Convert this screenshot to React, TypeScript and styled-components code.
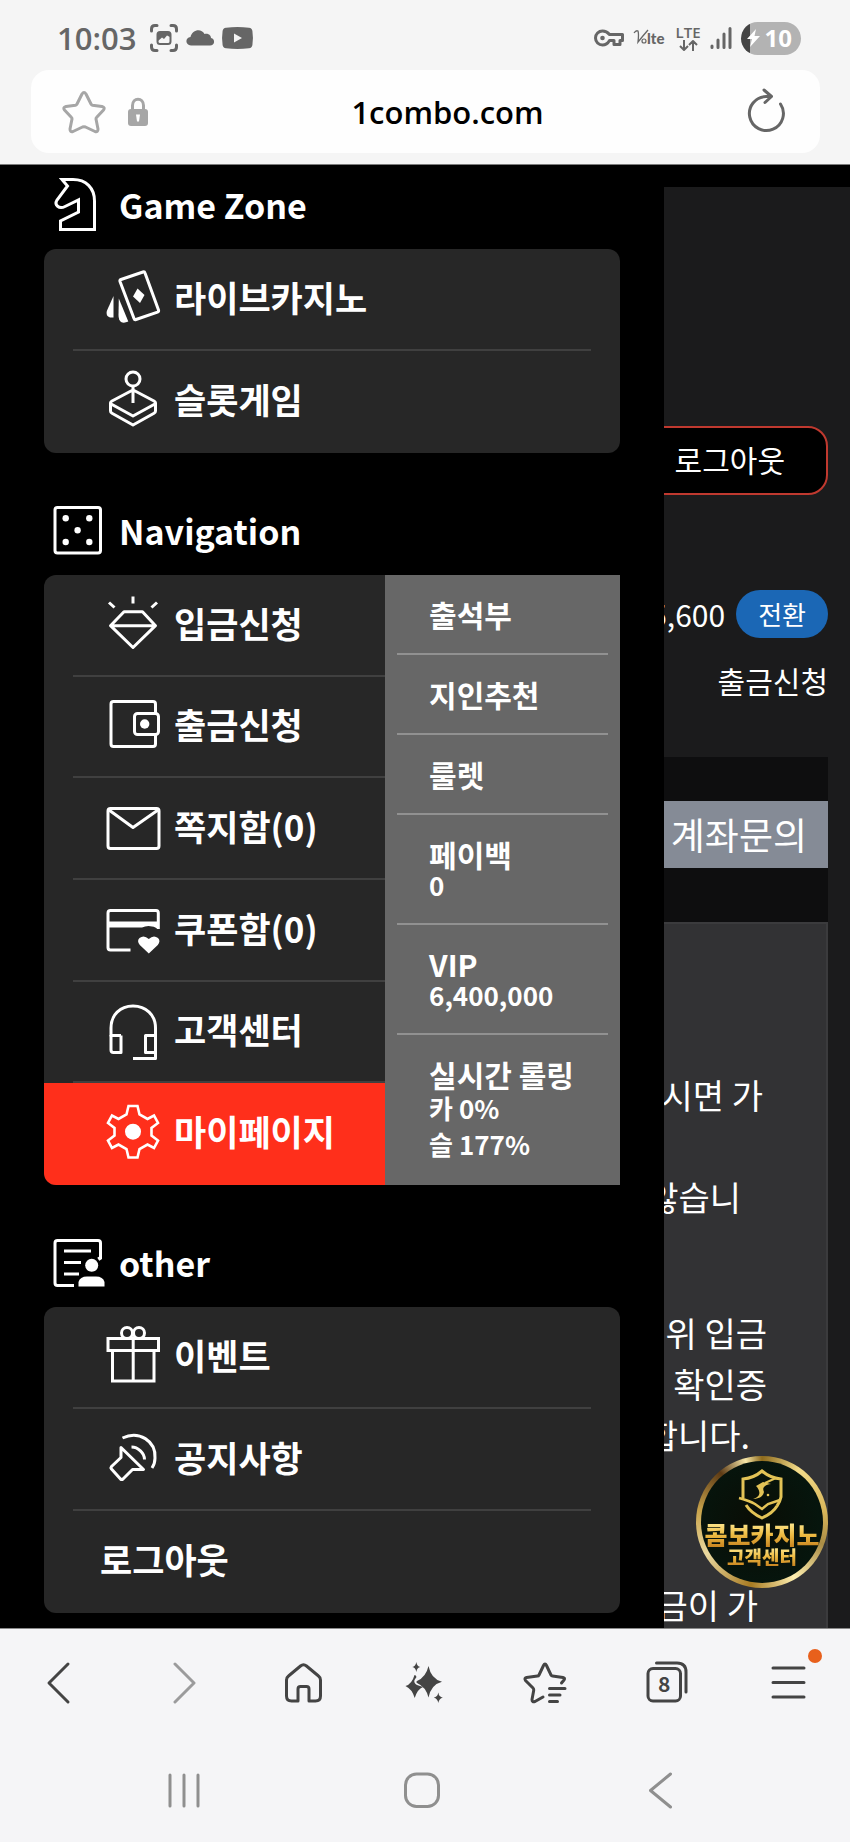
import * as React from 'react';
import styled, { createGlobalStyle } from 'styled-components';

const GlobalStyle = createGlobalStyle`
  * {
    box-sizing: border-box;
  }
  body {
    margin: 0;
    background: #f5f5f7;
    font-family: 'Noto Sans CJK KR', 'Noto Sans', sans-serif;
  }
  h2, p, ul {
    margin: 0;
    padding: 0;
  }
  ul {
    list-style: none;
  }
  a {
    color: inherit;
    text-decoration: none;
  }
  button {
    border: 0;
    padding: 0;
    background: none;
    color: inherit;
    font: inherit;
    cursor: pointer;
  }
  svg {
    display: block;
    flex: none;
    overflow: visible;
  }
`;

/* ---------- browser chrome ---------- */

const StatusBar = styled.div`
  display: flex;
  align-items: center;
  justify-content: space-between;
  height: 70px;
  padding: 6px 49px 0 57px;
  background: #f5f5f5;
  color: #666;
`;

const StatusGroup = styled.div<{ $gap: number }>`
  display: flex;
  align-items: center;
  gap: ${(p) => p.$gap}px;
`;

const Clock = styled.span`
  margin-right: 6px;
  font: 600 31px/36px 'Open Sans', sans-serif;
`;

const Network = styled.div`
  display: flex;
  flex-direction: column;
  align-items: center;
  font: 600 15px/14px 'Open Sans', sans-serif;
`;

const Battery = styled.div`
  display: flex;
  align-items: center;
  gap: 4px;
  height: 33px;
  padding: 0 9px 0 10px;
  border-radius: 17px;
  background: linear-gradient(90deg, #444 9px, #b3b3b3 9px);
  color: #fff;
  font: 700 24px/32px 'Open Sans', sans-serif;
`;

const AddressArea = styled.div`
  padding: 0 30px 11px 31px;
  border-bottom: 1px solid #7c7c7c;
  background: #f5f5f5;
`;

const AddressBar = styled.form`
  display: flex;
  align-items: center;
  height: 83px;
  padding: 0 34px 0 31px;
  border-radius: 18px;
  background: #fefefe;
`;

const IconButton = styled.button<{ $color: string }>`
  color: ${(p) => p.$color};
`;

const LockMark = styled.span`
  margin-left: 21px;
`;

const UrlInput = styled.input`
  flex: 1;
  min-width: 0;
  height: 48px;
  padding: 0;
  border: 0;
  outline: 0;
  background: none;
  color: #000;
  font: 600 31px/48px 'Open Sans', sans-serif;
  text-align: center;
`;

/* ---------- web view ---------- */

const WebView = styled.div`
  position: relative;
  display: grid;
  grid-template-columns: minmax(0, 25fr) minmax(0, 7fr);
  border-bottom: 1px solid #8a8a8a;
  background: #000;
  color: #fff;
`;

const Drawer = styled.nav`
  display: flex;
  flex-direction: column;
  gap: 38px;
  padding: 0 44px 15px;
`;

const SectionTitle = styled.h2`
  display: flex;
  align-items: flex-start;
  gap: 9px;
  height: 84px;
  padding: 10px 0 0 6px;
  font-size: 34px;
  line-height: 59px;
  font-weight: 700;
`;

const Card = styled.div`
  display: grid;
  grid-template-columns: minmax(0, 1fr) auto;
  border-radius: 12px;
  background: #272727;
`;

const MenuList = styled.ul<{ $split?: boolean }>`
  display: grid;
  grid-auto-rows: minmax(100px, 1fr);
  grid-column: ${(p) => (p.$split ? 'auto' : '1 / -1')};
`;

const MenuItem = styled.li<{ $active?: boolean; $split?: boolean }>`
  display: flex;
  min-height: ${(p) => (p.$split ? 100 : 102)}px;
  padding: 0 ${(p) => (p.$split ? 0 : 29)}px 0 29px;
  background: ${(p) => (p.$active ? '#ff2f1b' : 'none')};
  border-radius: ${(p) => (p.$active ? '0 0 0 12px' : 0)};

  &:not(:last-child) > a {
    border-bottom-color: #404040;
  }
`;

const MenuLink = styled.a`
  display: flex;
  flex: 1;
  align-items: center;
  gap: 8px;
  padding: 0 0 4px 27px;
  border-bottom: 2px solid transparent;
  font-size: 35px;
  line-height: 48px;
  font-weight: 700;
`;

const SubMenu = styled.ul`
  width: 235px;
  padding: 0 12px;
  background: #676767;
`;

const SubItem = styled.li`
  padding: 23px 0 23px 32px;
  font-size: 30px;
  line-height: 32px;
  font-weight: 700;

  &:not(:last-child) {
    border-bottom: 2px solid #919191;
  }
`;

const SubValue = styled.div<{ $tall?: boolean }>`
  font-size: 26px;
  line-height: ${(p) => (p.$tall ? 36 : 30)}px;
`;

const Page = styled.main`
  display: flex;
  flex-direction: column;
  margin-top: 22px;
  padding-right: 22px;
  overflow: hidden;
  background: #1b1b1c;
  font-size: 30px;
  line-height: 40px;
`;

const PageRow = styled.div<{ $top: number }>`
  display: flex;
  align-items: center;
  justify-content: flex-end;
  gap: 11px;
  margin-top: ${(p) => p.$top}px;
  white-space: nowrap;
`;

const LogoutButton = styled.button`
  flex: none;
  height: 69px;
  padding: 0 41px 3px;
  border: 2px solid #c0392f;
  border-radius: 20px;
  background: #000;
`;

const Amount = styled.span`
  flex: none;
`;

const ConvertButton = styled.button`
  flex: none;
  height: 48px;
  padding: 0 22px;
  border-radius: 24px;
  background: #1b67b5;
  font-size: 26px;
  line-height: 44px;
`;

const Banner = styled.div`
  display: flex;
  justify-content: flex-end;
  margin-top: 57px;
  padding: 44px 0 54px;
  background: #0e0e0f;
`;

const AccountButton = styled.button`
  flex: 1 0 auto;
  height: 67px;
  padding: 0 21px 2px;
  background: #858b96;
  font-size: 37px;
  line-height: 48px;
  text-align: right;
`;

const Notice = styled.div`
  flex: 1;
  display: flex;
  flex-direction: column;
  gap: 34px;
  contain: size;
  padding-top: 145px;
  border-top: 2px solid #3b3b3d;
  border-right: 2px solid #3b3b3d;
  background: #323234;
  font-size: 34px;
  line-height: 51px;
`;

const NoticeLine = styled.p<{ $inset: number }>`
  display: flex;
  justify-content: flex-end;
  height: 51px;
  padding-right: ${(p) => p.$inset}px;
  white-space: nowrap;
`;

const SupportBadge = styled.a`
  position: absolute;
  right: 22px;
  bottom: 40px;
  display: flex;
  flex-direction: column;
  align-items: center;
  width: 132px;
  height: 132px;
  padding-top: 7px;
  border: 5px solid transparent;
  border-radius: 50%;
  background:
    radial-gradient(circle at 45% 50%, #0a0d05, #06150d 70%, #020604) padding-box,
    conic-gradient(#8d6a1c, #f3dc8a 35deg, #d9b65a 80deg, #a98c45 110deg, #fff0b0 150deg,
      #a87b22 190deg, #ead9a0 240deg, #c9a44c 280deg, #5c3a14 320deg, #f7e7a8 345deg, #8d6a1c) border-box;
`;

const BadgeText = styled.span<{ $size: number }>`
  background: linear-gradient(#ffeb95, #eebc44 50%, #c98420);
  background-clip: text;
  color: transparent;
  font-size: ${(p) => p.$size}px;
  line-height: ${(p) => p.$size}px;
  font-weight: 900;
  white-space: nowrap;
`;

/* ---------- bottom bars ---------- */

const Toolbar = styled.div`
  display: grid;
  grid-template-columns: repeat(7, 1fr);
  height: 108px;
  color: #444;
`;

const SystemBar = styled.div`
  display: grid;
  grid-template-columns: repeat(3, 1fr);
  height: 105px;
  padding: 0 71px 0 65px;
  color: #8f8f8f;
`;

const BarButton = styled.button<{ $faded?: boolean }>`
  display: flex;
  align-items: center;
  justify-content: center;
  opacity: ${(p) => (p.$faded ? 0.5 : 1)};
`;

const IconHolder = styled.span`
  position: relative;
`;

const Dot = styled.span`
  position: absolute;
  top: -10px;
  right: -9px;
  width: 14px;
  height: 14px;
  border-radius: 50%;
  background: #e8601c;
`;

/* ---------- icons ---------- */

type IconProps = { w: number; h: number; stroke?: number; children: React.ReactNode };

const Icon = ({ w, h, stroke = 3, children }: IconProps) => (
  <svg
    width={w}
    height={h}
    viewBox={`0 0 ${w} ${h}`}
    fill="none"
    stroke="currentColor"
    strokeWidth={stroke}
    strokeLinejoin="round"
    aria-hidden="true"
  >
    {children}
  </svg>
);

const solid = { fill: 'currentColor', stroke: 'none' };

const titleIcons = {
  knight: (
    <path
      strokeLinejoin="miter"
      d="M12 4.500H23C36 4.500 44.500 13 44.500 26V54.500H10.500V46L28.500 37V25L15 31.500C9 34.500 4 30 7 25L17.500 11Z"
    />
  ),
  dice: (
    <>
      <rect x="5" y="6.500" width="45.500" height="45.500" rx="2.500" />
      <g {...solid}>
        <circle cx="15.700" cy="17.300" r="3.200" />
        <circle cx="39.300" cy="17.300" r="3.200" />
        <circle cx="27.600" cy="29.200" r="3.200" />
        <circle cx="15.700" cy="41" r="3.200" />
        <circle cx="39.300" cy="41" r="3.200" />
      </g>
    </>
  ),
  board: (
    <>
      <path d="M50.500 27L48.500 24M50.500 26V10Q50.500 7.500 48 7.500H7.500Q5 7.500 5 10V50Q5 52.500 7.500 52.500H24" />
      <path d="M14 18H41M14 29.500H31M14 41H29" />
      <circle cx="41.700" cy="32.300" r="6.500" {...solid} />
      <path d="M28.500 53.500V49Q30 43.500 37 43.500H46Q53 43.500 54.500 49V53.500Z" {...solid} />
    </>
  ),
};

const menuIcons = {
  cards: (
    <>
      <path d="M21 12.500L43 5Q44.500 4.500 45 6L58.500 43Q59 44.500 57.500 45.200L36 52.500Q34.500 53 34 51.500L20 14.500Q19.500 13 21 12.500Z" />
      <path d="M37.500 21.500L44.500 28L40 36L33 29.500Z" {...solid} />
      <path d="M13.500 29V50.500H10Q5.500 49 6.800 44Z" {...solid} />
      <path d="M18.800 31.500L28.300 54.500Q24 56.500 21 55Q18.500 53 18.500 48Z" {...solid} />
    </>
  ),
  joystick: (
    <>
      <circle cx="33" cy="10" r="7" />
      <path d="M33 17V34M30 22.500L12 32Q9 33.800 12 35.500L33 47L54 35.500Q57 33.800 54 32L36 22.500L33 21Z" />
      <path d="M10.500 34V42Q10.500 43.500 12 44.300L33 56L54 44.300Q55.500 43.500 55.500 42V34" />
    </>
  ),
  gem: (
    <path d="M33 3.500V10.500M9 9.500L14.500 14.500M57 9.500L51.500 14.500M24 18.700H42.500L55.500 32.700L33 54.500L10.500 32.700ZM10.500 32.700H55.500" />
  ),
  wallet: (
    <>
      <path d="M55.500 19V10Q55.500 7.500 53 7.500H13.500Q11 7.500 11 10V50Q11 52.500 13.500 52.500H53Q55.500 52.500 55.500 50V41" />
      <rect x="34.500" y="19.500" width="24" height="21" rx="3" />
      <circle cx="44.700" cy="30" r="4.700" {...solid} />
    </>
  ),
  mail: (
    <>
      <rect x="8" y="12.500" width="51" height="40" rx="2.500" />
      <path d="M9 14L33 31.500L58 14" />
    </>
  ),
  coupon: (
    <>
      <path d="M58.300 31V15Q58.300 12.500 56 12.500H10.500Q8 12.500 8 15V49.500Q8 52 10.500 52H30.500" />
      <path d="M8 23.500H58.300V31Q54 28 48.500 28Q45 28 42 29.500H8Z" {...solid} />
      <path
        d="M48.800 55.500L39.800 47Q36.500 43 39.500 40Q44 36.500 48.800 41Q53.500 36.500 58 40Q61 43 57.800 47Z"
        {...solid}
      />
    </>
  ),
  headset: (
    <>
      <path d="M21 36.500H11V29C11 16 20 7 33 7S55.500 16 55.500 29V59.500H33" />
      <path d="M11 36V51Q11 53.500 13.500 53.500H21V36.500M55.500 36.500H45.500V53.500H55.500" />
    </>
  ),
  gear: (
    <>
      <path
        strokeLinejoin="miter"
        strokeWidth="2.600"
        d="M28.500 5H37.500L39.500 13.500L47.500 18L54 14.500L58 22L51.500 27V34.500L58 39.500L54 47L47.500 43.500L39.500 48L37.500 56.500H28.500L26.500 48L18.500 43.500L12 47L8 39.500L14.500 34.500V27L8 22L12 14.500L18.500 18L26.500 13.500Z"
      />
      <circle cx="33" cy="30.700" r="8" {...solid} />
    </>
  ),
  gift: (
    <g strokeLinejoin="miter">
      <circle cx="27" cy="8" r="5.500" />
      <circle cx="39" cy="8" r="5.500" />
      <rect x="8" y="13.500" width="50.500" height="12" />
      <path d="M12.500 25.500V56H54V25.500M33.200 13V56" />
    </g>
  ),
  megaphone: (
    <>
      <path d="M21 20.500L43.500 42.500H32.500L23 52Q21.700 53 20.500 52L11.500 42Q10.500 40.700 11.500 39.500L21 30.500Z" />
      <path d="M31.500 20C38 20 44.500 26 44.500 32.500M22.500 11C39 3 56 14 55 31C55 35 54 38 52 41" />
    </>
  ),
};

/* ---------- content ---------- */

type MenuEntry = { label: string; icon?: keyof typeof menuIcons; active?: boolean };

const gameMenu: MenuEntry[] = [
  { label: '라이브카지노', icon: 'cards' },
  { label: '슬롯게임', icon: 'joystick' },
];

const navMenu: MenuEntry[] = [
  { label: '입금신청', icon: 'gem' },
  { label: '출금신청', icon: 'wallet' },
  { label: '쪽지함(0)', icon: 'mail' },
  { label: '쿠폰함(0)', icon: 'coupon' },
  { label: '고객센터', icon: 'headset' },
  { label: '마이페이지', icon: 'gear', active: true },
];

const otherMenu: MenuEntry[] = [
  { label: '이벤트', icon: 'gift' },
  { label: '공지사항', icon: 'megaphone' },
  { label: '로그아웃' },
];

const myPageMenu = [
  { label: '출석부', values: [] },
  { label: '지인추천', values: [] },
  { label: '룰렛', values: [] },
  { label: '페이백', values: ['0'] },
  { label: 'VIP', values: ['6,400,000'] },
  { label: '실시간 롤링', values: ['카 0%', '슬 177%'] },
];

// an empty text is a blank line of the notice
const noticeParagraphs = [
  [
    { text: '시면 가', inset: 63 },
    { text: '', inset: 0 },
    { text: '않습니', inset: 85 },
    { text: '', inset: 0 },
  ],
  [
    { text: '위 입금', inset: 59 },
    { text: '확인증', inset: 59 },
    { text: '합니다.', inset: 76 },
  ],
  [{ text: '', inset: 0 }],
  [{ text: '금이 가', inset: 68 }],
];

const Menu = ({ items, split }: { items: MenuEntry[]; split?: boolean }) => (
  <MenuList $split={split}>
    {items.map((item) => (
      <MenuItem key={item.label} $active={item.active} $split={split}>
        <MenuLink href="#">
          {item.icon && (
            <Icon w={66} h={60}>
              {menuIcons[item.icon]}
            </Icon>
          )}
          {item.label}
        </MenuLink>
      </MenuItem>
    ))}
  </MenuList>
);

const Title = ({ icon, children }: { icon: keyof typeof titleIcons; children: string }) => (
  <SectionTitle>
    <Icon w={60} h={64}>
      {titleIcons[icon]}
    </Icon>
    {children}
  </SectionTitle>
);

const StatusIcons = () => (
  <StatusBar>
    <StatusGroup $gap={8}>
      <Clock>10:03</Clock>
      <Icon w={28} h={28}>
        <path
          strokeLinecap="round"
          d="M1.500 7V5Q1.500 1.500 5 1.500H7M21 1.500H23Q26.500 1.500 26.500 5V7M26.500 21V23Q26.500 26.500 23 26.500H21M7 26.500H5Q1.500 26.500 1.500 23V21"
        />
        <rect x="7.500" y="8" width="13" height="12" rx="2.500" stroke="currentColor" strokeWidth="2" />
        <path d="M8 9H20V13L17 11.500L14 15L12 13.500L8 17Z" {...solid} />
      </Icon>
      <Icon w={28} h={18}>
        <path d="M5 16.500C-1 16 -1 8.500 4.500 8C6 1 15 -1.500 18.500 5C23 4 25 7 25 9C29.500 10 29 16.500 24 16.500Z" {...solid} />
      </Icon>
      <Icon w={31} h={22}>
        <path
          fillRule="evenodd"
          d="M4 .8Q15.500 -.8 27 .8Q30 1 30.400 4Q31.500 11 30.400 18Q30 21 27 21.300Q15.500 22.800 4 21.300Q1 21 .6 18Q-.5 11 .6 4Q1 1 4 .8ZM12 6.500V15.500L20 11Z"
          {...solid}
        />
      </Icon>
    </StatusGroup>
    <StatusGroup $gap={9}>
      <Icon w={30} h={18}>
        <path d="M15.500 5.500H28.500V11.500H26V15.500H20V11.500H15.500C13.500 15 11 16 8.500 16A7 7 0 0 1 8.500 2C11 2 13.500 3 15.500 5.500Z" />
        <circle cx="8.500" cy="9" r="2.300" {...solid} />
      </Icon>
      <svg width="34" height="20" viewBox="0 0 34 20" fill="currentColor" role="img" aria-label="VoLTE">
        <path d="M1 5Q3 2 5 3Q6 6 5 14Q9 9 15 2" fill="none" stroke="currentColor" strokeWidth="1.300" />
        <circle cx="11" cy="13" r="2" fill="none" stroke="currentColor" strokeWidth="1.200" />
        <text x="14" y="16" fontFamily="Lato" fontWeight="900" fontSize="15">
          lte
        </text>
      </svg>
      <Network>
        LTE
        <Icon w={20} h={13} stroke={2}>
          <path d="M6 1V11M2 7L6 11L10 7M15 12V2M11 6L15 2L19 6" />
        </Icon>
      </Network>
      <Icon w={22} h={24} stroke={3}>
        <path strokeLinecap="round" d="M2 20V21.500M8 14V21.500M14 8V21.500M20 2.500V21.500" />
      </Icon>
      <Battery>
        <Icon w={10} h={18} stroke={0}>
          <path d="M5 0L-4 10H1L-1 18L9 7H3.500Z" {...solid} />
        </Icon>
        10
      </Battery>
    </StatusGroup>
  </StatusBar>
);

const App = () => {
  return (
    <>
      <GlobalStyle />
      <StatusIcons />
      <AddressArea>
        <AddressBar onSubmit={(e) => e.preventDefault()}>
          <IconButton type="button" aria-label="Bookmark" $color="#a6a6a6">
            <Icon w={44} h={44}>
              <path d="M20 4Q22 1 24 4L29 14Q29.500 15 30.500 15.200L40 16.500Q43.500 17.500 41.500 20L34.500 27.500Q34 28 34 29L36 39Q36 42.500 33 41.500L23.500 37Q22 36.500 20.500 37L11 41.500Q8 42.500 8 39L10 29Q10 28 9.500 27.500L2.500 20Q.5 17.500 4 16.500L13.500 15.200Q14.500 15 15 14Z" />
            </Icon>
          </IconButton>
          <LockMark>
            <Icon w={22} h={30}>
              <path d="M5.500 13V8.500C5.500 0 16.500 0 16.500 8.500V13" stroke="#a6a6a6" />
              <rect x="1" y="12" width="20" height="17" rx="3" fill="#a6a6a6" stroke="none" />
              <path d="M9 17.500H13L12 24.500H10Z" fill="#fff" stroke="none" />
            </Icon>
          </LockMark>
          <UrlInput aria-label="Address" defaultValue="1combo.com" />
          <IconButton type="button" aria-label="Reload" $color="#666">
            <Icon w={40} h={46}>
              <path strokeLinecap="round" d="M34.500 15A17 17 0 1 1 20 7.500H25M18 1L25.500 7.500L19 13.500" />
            </Icon>
          </IconButton>
        </AddressBar>
      </AddressArea>

      <WebView>
        <Drawer>
          <section>
            <Title icon="knight">Game Zone</Title>
            <Card>
              <Menu items={gameMenu} />
            </Card>
          </section>
          <section>
            <Title icon="dice">Navigation</Title>
            <Card>
              <Menu items={navMenu} split />
              <SubMenu>
                {myPageMenu.map((item) => (
                  <SubItem key={item.label}>
                    <a href="#">{item.label}</a>
                    {item.values.map((value) => (
                      <SubValue key={value} $tall={item.values.length > 1}>
                        {value}
                      </SubValue>
                    ))}
                  </SubItem>
                ))}
              </SubMenu>
            </Card>
          </section>
          <section>
            <Title icon="board">other</Title>
            <Card>
              <Menu items={otherMenu} />
            </Card>
          </section>
        </Drawer>

        <Page>
          <PageRow $top={239}>
            <LogoutButton>로그아웃</LogoutButton>
          </PageRow>
          <PageRow $top={95}>
            <Amount>5,600</Amount>
            <ConvertButton>전환</ConvertButton>
          </PageRow>
          <PageRow $top={22}>
            <a href="#">출금신청</a>
          </PageRow>
          <Banner>
            <AccountButton>계좌문의</AccountButton>
          </Banner>
          <Notice>
            {noticeParagraphs.map((lines, i) => (
              <div key={i}>
                {lines.map((line, j) => (
                  <NoticeLine key={j} $inset={line.inset}>
                    {line.text}
                  </NoticeLine>
                ))}
              </div>
            ))}
          </Notice>
        </Page>

        <SupportBadge href="#">
          <svg width="48" height="54" viewBox="0 0 48 54" fill="none" stroke="#e3c356" strokeWidth="3">
            <path d="M5 30V11Q16 10 24 3Q32 10 43 11V29Q42 34 39 38M8 37Q13 45 24 50Q35 45 39 38" />
            <path d="M1 30Q12 33 17 36L24 41L30 36Q36 34 42 32" strokeWidth="2.500" />
            <path d="M15 31C25 28 21 21 18 18L25 14L33 16C26 17 24 20 26 24C25 29 20 31 15 31Z" fill="#e3c356" stroke="none" />
            <path d="M27 15L38 10" strokeWidth="2" />
            <circle cx="30" cy="27" r="1.300" fill="#e3c356" stroke="none" />
          </svg>
          <BadgeText $size={25}>콤보카지노</BadgeText>
          <BadgeText $size={19}>고객센터</BadgeText>
        </SupportBadge>
      </WebView>

      <Toolbar>
        <BarButton aria-label="Back">
          <Icon w={48} h={48}>
            <path strokeLinecap="round" d="M31 5L12 24L31 43" />
          </Icon>
        </BarButton>
        <BarButton aria-label="Forward" $faded>
          <Icon w={48} h={48}>
            <path strokeLinecap="round" d="M17 5L36 24L17 43" />
          </Icon>
        </BarButton>
        <BarButton aria-label="Home">
          <Icon w={48} h={48}>
            <path d="M6.500 21Q6.500 18.500 8.500 17L20.500 7Q23.500 4.500 26.500 7L38.500 17Q40.500 18.500 40.500 21V37Q40.500 42 35.500 42H29V30Q29 27.500 26.500 27.500H20.500Q18 27.500 18 30V42H11.500Q6.500 42 6.500 37Z" />
          </Icon>
        </BarButton>
        <BarButton aria-label="AI">
          <Icon w={48} h={48}>
            <g {...solid}>
              <path d="M15.300 3Q16 7.300 19.300 8Q16 8.700 15.300 13Q14.600 8.700 11.300 8Q14.600 7.300 15.300 3Z" />
              <path d="M13.500 16Q15 16 15.500 18L13.500 21Q12.500 24 16 26L22 28Q16.500 30 13.700 39Q11 30 4.500 27Q11 25 13.500 16Z" />
              <path d="M27.500 7Q30 20 41 22.700Q30 25.500 27.500 38.500Q25 28 16 24Q14.500 23 16 22Q25 18 27.500 7Z" />
              <path d="M37.300 33.500Q38 38 41.800 38.700Q38 39.400 37.300 44Q36.600 39.400 32.800 38.700Q36.600 38 37.300 33.500Z" />
            </g>
          </Icon>
        </BarButton>
        <BarButton aria-label="Bookmarks">
          <Icon w={48} h={48}>
            <path
              strokeLinecap="round"
              d="M39.500 24L42 21Q43.500 19 41 18.500L30.500 17Q29.500 17 29 16L24.500 6.500Q23 3.500 21.500 6.500L17 16Q16.500 17 15.500 17L4.500 18.500Q2 19 3.500 21.500L11 29Q12 30 11.700 31.500L10 40.500Q10 43.500 13 42.500L21 38"
            />
            <path strokeLinecap="round" d="M27.500 29.500H43M27.500 36H38M27.500 42.500H35.500" />
          </Icon>
        </BarButton>
        <BarButton aria-label="Tabs">
          <svg width="48" height="48" viewBox="0 0 48 48" fill="none" stroke="currentColor" strokeWidth="3">
            <rect x="4" y="9.500" width="32.500" height="32.500" rx="5" />
            <path strokeLinecap="round" d="M12.500 4H33Q42 4 42 13V33" />
            <text
              x="20.300"
              y="33"
              textAnchor="middle"
              fontFamily="Noto Sans CJK KR"
              fontWeight="700"
              fontSize="21"
              fill="currentColor"
              stroke="none"
            >
              8
            </text>
          </svg>
        </BarButton>
        <BarButton aria-label="Menu">
          <IconHolder>
            <Icon w={48} h={48}>
              <path strokeLinecap="round" d="M8 9H39M8 23.500H39M8 38H39" />
            </Icon>
            <Dot />
          </IconHolder>
        </BarButton>
      </Toolbar>

      <SystemBar>
        <BarButton aria-label="Recents">
          <Icon w={48} h={48}>
            <path strokeLinecap="round" d="M10 9V40M24 9V40M38 9V40" />
          </Icon>
        </BarButton>
        <BarButton aria-label="Home screen">
          <Icon w={48} h={48}>
            <rect x="7.500" y="8" width="33" height="32.500" rx="11" />
          </Icon>
        </BarButton>
        <BarButton aria-label="Go back">
          <Icon w={48} h={48}>
            <path strokeLinecap="round" d="M34.500 8L14.500 24.500L34.500 41" />
          </Icon>
        </BarButton>
      </SystemBar>
    </>
  );
};

export default App;
